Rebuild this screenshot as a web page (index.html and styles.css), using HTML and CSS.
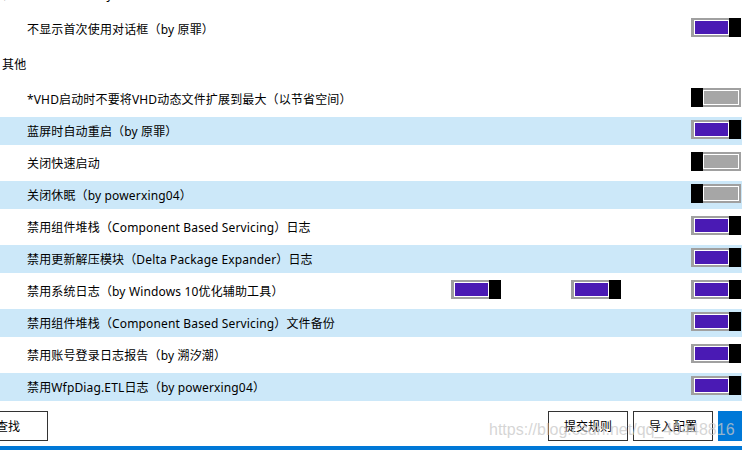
FILE: index.html
```html
<!DOCTYPE html>
<html lang="zh-CN">
<head>
<meta charset="utf-8">
<title>设置</title>
<link rel="stylesheet" href="styles.css">
</head>
<body>
<div class="page">
  <div class="list">
    <div class="group">任务栏与通知区（by 原罪）</div>
    <div class="row"><span class="label">不显示首次使用对话框（by 原罪）</span><div class="toggles"><span class="toggle on"><i class="fill"></i><i class="knob"></i></span></div></div>
    <div class="group">其他</div>
    <div class="row"><span class="label">*VHD启动时不要将VHD动态文件扩展到最大（以节省空间）</span><div class="toggles"><span class="toggle off"><i class="knob"></i><i class="fill"></i></span></div></div>
    <div class="row alt"><span class="label">蓝屏时自动重启（by 原罪）</span><div class="toggles"><span class="toggle on"><i class="fill"></i><i class="knob"></i></span></div></div>
    <div class="row"><span class="label">关闭快速启动</span><div class="toggles"><span class="toggle off"><i class="knob"></i><i class="fill"></i></span></div></div>
    <div class="row alt"><span class="label">关闭休眠（by powerxing04）</span><div class="toggles"><span class="toggle off"><i class="knob"></i><i class="fill"></i></span></div></div>
    <div class="row"><span class="label">禁用组件堆栈（Component Based Servicing）日志</span><div class="toggles"><span class="toggle on"><i class="fill"></i><i class="knob"></i></span></div></div>
    <div class="row alt"><span class="label">禁用更新解压模块（Delta Package Expander）日志</span><div class="toggles"><span class="toggle on"><i class="fill"></i><i class="knob"></i></span></div></div>
    <div class="row"><span class="label">禁用系统日志（by Windows 10优化辅助工具）</span><div class="toggles"><span class="toggle on"><i class="fill"></i><i class="knob"></i></span><span class="toggle on"><i class="fill"></i><i class="knob"></i></span><span class="toggle on"><i class="fill"></i><i class="knob"></i></span></div></div>
    <div class="row alt"><span class="label">禁用组件堆栈（Component Based Servicing）文件备份</span><div class="toggles"><span class="toggle on"><i class="fill"></i><i class="knob"></i></span></div></div>
    <div class="row"><span class="label">禁用账号登录日志报告（by 溯汐潮）</span><div class="toggles"><span class="toggle on"><i class="fill"></i><i class="knob"></i></span></div></div>
    <div class="row alt"><span class="label">禁用WfpDiag.ETL日志（by powerxing04）</span><div class="toggles"><span class="toggle on"><i class="fill"></i><i class="knob"></i></span></div></div>
  </div>
  <div class="footer">
    <button class="btn find">查找</button>
    <div class="actions">
      <button class="btn">提交规则</button>
      <button class="btn">导入配置</button>
      <button class="btn primary">保存</button>
    </div>
  </div>
  <div class="statusbar"></div>
  <div class="watermark">https://blog.csdn.net/qq_40448816</div>
</div>
</body>
</html>
```

FILE: styles.css
```css
html, body {
  margin: 0;
  padding: 0;
  background: #fff;
}
body {
  width: 742px;
  height: 450px;
  overflow: hidden;
  font-family: "Noto Sans", "Noto Sans CJK SC", sans-serif;
  font-size: 12px;
  color: #000;
}
.page {
  position: relative;
  width: 742px;
  height: 450px;
  overflow: hidden;
}
.list {
  display: flex;
  flex-direction: column;
  gap: 4px;
  margin-top: -23px;
}
.group {
  height: 34px;
  display: flex;
  align-items: center;
  padding-left: 2px;
  letter-spacing: 0.15px;
}
.row {
  height: 28px;
  display: flex;
  align-items: center;
  padding-left: 27px;
  padding-right: 1px;
}
.row.alt {
  background: #cce8f9;
}
.label {
  white-space: nowrap;
  letter-spacing: 0.15px;
}
.toggles {
  margin-left: auto;
  align-self: flex-start;
  padding-top: 3px;
  display: flex;
  gap: 70px;
}
.toggle {
  display: flex;
  width: 50px;
  height: 19px;
  background: #a0a0a0;
}
.toggle i {
  display: block;
}
.toggle .knob {
  width: 12px;
  background: #000;
}
.toggle .fill {
  flex: 1;
  border: 1px solid #fff;
}
.toggle.on .fill {
  margin: 2px 0 2px 3px;
  background: #4a1ab4;
}
.toggle.off .fill {
  margin: 2px 2px 2px 0;
  background: #a6a6a6;
}
.footer {
  display: flex;
  height: 30px;
  margin-top: 10px;
}
.btn {
  box-sizing: border-box;
  width: 80px;
  height: 30px;
  margin: 0;
  padding: 0;
  border: 1px solid #333;
  background: #fff;
  font-family: inherit;
  font-size: 12px;
  color: #000;
}
.find {
  margin-left: -32px;
}
.actions {
  margin-left: auto;
  display: flex;
  gap: 5px;
  margin-right: -96px;
}
.btn.primary {
  width: 120px;
  background: #0078d7;
  border-color: #0078d7;
  color: #fff;
}
.statusbar {
  margin-top: 5px;
  height: 4px;
  background: #0078d7;
}
.watermark {
  position: absolute;
  left: 489px;
  top: 421px;
  font-family: "Liberation Sans", Arial, sans-serif;
  font-size: 16px;
  line-height: 18px;
  color: rgba(200, 200, 200, 0.75);
  white-space: nowrap;
  pointer-events: none;
}
```
